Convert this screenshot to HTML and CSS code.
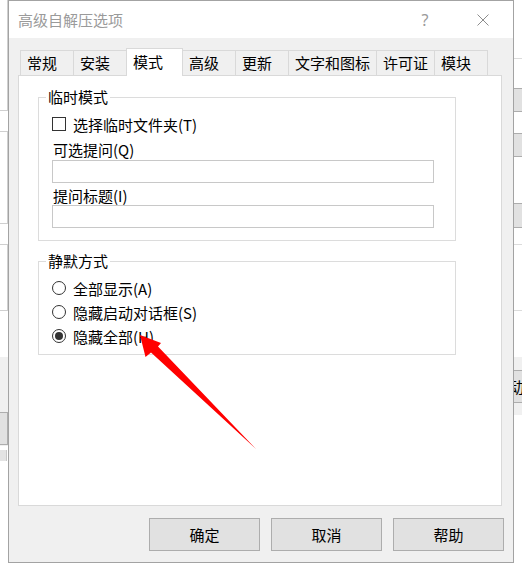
FILE: index.html
```html
<!DOCTYPE html>
<html lang="zh-CN">
<head>
<meta charset="utf-8">
<title>高级自解压选项</title>
<link rel="stylesheet" href="styles.css">
</head>
<body>
<div class="backdrop">
  <div class="bk bk-l1"></div>
  <div class="bk bk-l2"></div>
  <div class="bk bk-l3"></div>
  <div class="bk bk-l4"><div class="bk-btn bk-btn-l">确定</div></div>
  <div class="bk bk-l5"></div>
  <div class="bk bk-r-line bk-r1"></div>
  <div class="bk bk-rbox bk-r2"></div>
  <div class="bk bk-rbox bk-r3"></div>
  <div class="bk bk-rbox bk-r4"></div>
  <div class="bk bk-r-line bk-r5"></div>
  <div class="bk bk-r-line bk-r6"></div>
  <div class="bk bk-r7"><div class="bk-btn bk-btn-r">动</div></div>
</div>

<div class="dialog">
  <div class="titlebar">
    <span class="title">高级自解压选项</span>
    <span class="help">?</span>
    <span class="close">
      <svg width="12" height="12" viewBox="0 0 12 12"><path d="M0.5 0.5L11.5 11.5M11.5 0.5L0.5 11.5" stroke="#8c8c8c" stroke-width="1" fill="none"/></svg>
    </span>
  </div>
  <div class="client">
    <div class="tabs">
      <div class="tab">常规</div>
      <div class="tab">安装</div>
      <div class="tab active">模式</div>
      <div class="tab">高级</div>
      <div class="tab">更新</div>
      <div class="tab">文字和图标</div>
      <div class="tab">许可证</div>
      <div class="tab">模块</div>
    </div>
    <div class="panel">
      <fieldset class="group">
        <legend>临时模式</legend>
        <div class="group-body group-body-temp">
          <div class="check-row"><span class="checkbox"></span><span>选择临时文件夹(T)</span></div>
          <div class="field-label field-label-first">可选提问(Q)</div>
          <div class="textbox textbox-first"></div>
          <div class="field-label field-label-second">提问标题(I)</div>
          <div class="textbox"></div>
        </div>
      </fieldset>
      <fieldset class="group group-silent">
        <legend>静默方式</legend>
        <div class="group-body group-body-silent">
          <div class="radio-row radio-row-first"><span class="radio"></span><span>全部显示(A)</span></div>
          <div class="radio-row"><span class="radio"></span><span>隐藏启动对话框(S)</span></div>
          <div class="radio-row"><span class="radio checked"></span><span>隐藏全部(H)</span></div>
        </div>
      </fieldset>
    </div>
    <div class="buttons">
      <div class="btn">确定</div>
      <div class="btn">取消</div>
      <div class="btn">帮助</div>
    </div>
  </div>
</div>

<svg class="arrow" width="522" height="571" viewBox="0 0 522 571">
  <polygon points="140,335 161,343 158,346.5 256,449 151,352.5 145.5,357" fill="#ff0000"/>
</svg>
</body>
</html>
```

FILE: styles.css
```css
body {
  margin: 0;
  width: 522px;
  height: 571px;
  overflow: hidden;
  position: relative;
  background: #ffffff;
  font-family: "Noto Sans CJK SC", "Noto Sans", sans-serif;
  font-size: 15px;
  color: #000000;
}

/* windows behind the dialog */
.backdrop .bk {
  position: absolute;
  box-sizing: border-box;
}
.bk-l1 { left: -1px; top: -1px; width: 9px; height: 112px; border: 1px solid #cfcfcf; }
.bk-l2 { left: -1px; top: 131px; width: 9px; height: 93px; border: 1px solid #cfcfcf; }
.bk-l3 { left: -1px; top: 244px; width: 9px; height: 67px; border: 1px solid #cfcfcf; }
.bk-l4 { left: 0; top: 357px; width: 8px; height: 89px; background: #f0f0f0; overflow: hidden; }
.bk-l5 { left: 0; top: 450px; width: 8px; height: 11px; background: #e3e3e3; border-right: 1px solid #c8c8c8; width: 7px; }
.bk-btn {
  position: absolute;
  height: 33px;
  width: 60px;
  box-sizing: border-box;
  border: 1px solid #adadad;
  background: #e1e1e1;
  line-height: 31px;
  font-size: 15px;
  white-space: nowrap;
}
.bk-btn-l { left: -52px; top: 55px; text-align: right; padding-right: 14px; }
.bk-r-line { left: 514px; width: 8px; height: 1px; background: #dcdcdc; }
.bk-r1 { top: 58px; }
.bk-r5 { top: 244px; }
.bk-r6 { top: 310px; }
.bk-rbox { left: 514px; width: 9px; background: #e1e1e1; border-top: 1px solid #adadad; border-bottom: 1px solid #adadad; }
.bk-r2 { top: 88px; height: 24px; }
.bk-r3 { top: 133px; height: 24px; }
.bk-r4 { top: 203px; height: 25px; }
.bk-r7 { left: 514px; top: 357px; width: 8px; height: 58px; background: #f0f0f0; overflow: hidden; }
.bk-btn-r { left: 0; top: 13px; padding-left: 0; margin-left: -6px; }

/* dialog */
.dialog {
  position: absolute;
  left: 8px;
  top: 0;
  width: 506px;
  height: 563px;
  box-sizing: border-box;
  border: 1px solid #a3a3a3;
  background: #f0f0f0;
  display: flex;
  flex-direction: column;
}

.titlebar {
  height: 37px;
  flex-shrink: 0;
  background: #ffffff;
  display: flex;
  align-items: center;
  padding: 0 7px 0 9px;
}
.title {
  color: #9a9a9a;
  line-height: 20px;
}
.help {
  margin-left: auto;
  margin-right: 12px;
  width: 46px;
  text-align: center;
  color: #9a9a9a;
  font-family: "Noto Sans", sans-serif;
  font-size: 16px;
  line-height: 20px;
}
.close {
  width: 46px;
  height: 20px;
  display: flex;
  align-items: center;
  justify-content: center;
}

.client {
  flex: 1;
  padding: 10px 9px 11px 9px;
  display: flex;
  flex-direction: column;
}

.tabs {
  display: flex;
  align-items: flex-end;
  height: 27px;
  margin-left: 2px;
}
.tab {
  box-sizing: border-box;
  height: 25px;
  min-width: 54px;
  padding: 0 6px;
  margin-left: -1px;
  border: 1px solid #d9d9d9;
  border-bottom: none;
  background: #f0f0f0;
  line-height: 24px;
  white-space: nowrap;
}
.tab:first-child { margin-left: 0; }
.tab.active {
  height: 28px;
  min-width: 57px;
  margin-bottom: -1px;
  background: #ffffff;
  line-height: 26px;
  position: relative;
  z-index: 1;
}

.panel {
  width: 484px;
  height: 431px;
  box-sizing: border-box;
  border: 1px solid #d9d9d9;
  background: #ffffff;
  padding: 12px 0 0 19px;
}

.group {
  width: 418px;
  box-sizing: border-box;
  margin: 0;
  padding: 0;
  border: 1px solid #dcdcdc;
  min-inline-size: auto;
}
.group legend {
  margin-left: 7px;
  padding: 0 2px;
  line-height: 18px;
  font-size: 15px;
}
.group-silent { margin-top: 11px; }

.group-body { padding-left: 13px; }
.group-body-temp { padding-bottom: 12px; }
.group-body-silent { padding-bottom: 6px; }

.check-row {
  display: flex;
  align-items: center;
  gap: 7px;
  height: 20px;
  margin-top: 8px;
}
.checkbox {
  width: 14px;
  height: 14px;
  box-sizing: border-box;
  border: 1px solid #333333;
  background: #ffffff;
}

.field-label {
  line-height: 18px;
  padding-left: 1px;
}
.field-label-first { margin-top: 7px; }
.field-label-second { margin-top: 4px; }

.textbox {
  width: 382px;
  height: 23px;
  box-sizing: border-box;
  border: 1px solid #c8c8c8;
  background: #ffffff;
}
.textbox-first { margin-top: 1px; }

.radio-row {
  display: flex;
  align-items: center;
  gap: 7px;
  height: 24px;
}
.radio-row-first { margin-top: 6px; }
.radio {
  width: 14px;
  height: 14px;
  box-sizing: border-box;
  border: 1px solid #333333;
  border-radius: 50%;
  background: #ffffff;
  display: flex;
  align-items: center;
  justify-content: center;
}
.radio.checked::after {
  content: "";
  width: 8px;
  height: 8px;
  border-radius: 50%;
  background: #333333;
}

.buttons {
  display: flex;
  justify-content: flex-end;
  gap: 11px;
  margin-top: 12px;
}
.btn {
  width: 111px;
  height: 33px;
  box-sizing: border-box;
  border: 1px solid #adadad;
  background: #e1e1e1;
  line-height: 31px;
  text-align: center;
}

.arrow {
  position: absolute;
  left: 0;
  top: 0;
  pointer-events: none;
}
```
